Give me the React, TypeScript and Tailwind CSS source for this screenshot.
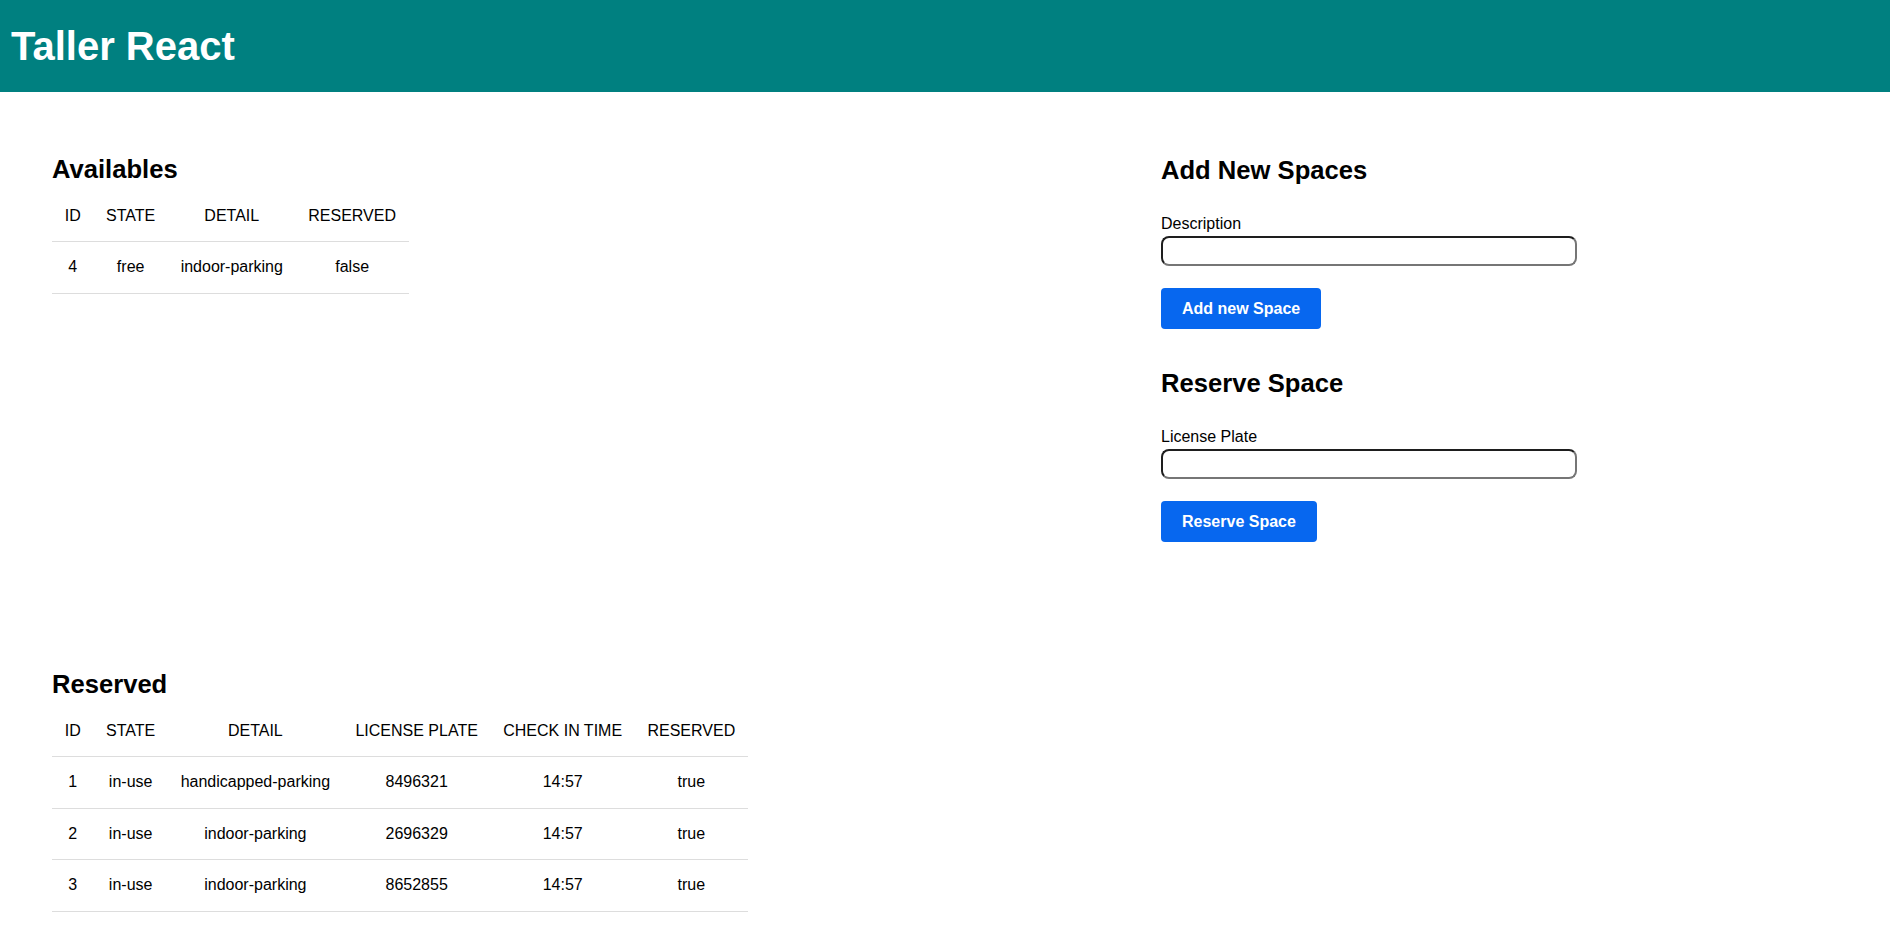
import React from 'react';

const available = [{ id: 4, state: 'free', detail: 'indoor-parking', reserved: 'false' }];

const reserved = [
  { id: 1, state: 'in-use', detail: 'handicapped-parking', plate: '8496321', time: '14:57', reserved: 'true' },
  { id: 2, state: 'in-use', detail: 'indoor-parking', plate: '2696329', time: '14:57', reserved: 'true' },
  { id: 3, state: 'in-use', detail: 'indoor-parking', plate: '8652855', time: '14:57', reserved: 'true' },
];

const cell = 'px-[12.7px] py-4 leading-[18.4px] text-center font-normal border-b border-[#dddddd]';

const Table = ({ headers, rows }: { headers: string[]; rows: (string | number)[][] }) => (
  <table className="mt-[7px] text-base text-black">
    <thead>
      <tr>
        {headers.map((h) => (
          <th key={h} className={cell}>
            {h}
          </th>
        ))}
      </tr>
    </thead>
    <tbody>
      {rows.map((r, i) => (
        <tr key={i}>
          {r.map((v, j) => (
            <td key={j} className={cell}>
              {v}
            </td>
          ))}
        </tr>
      ))}
    </tbody>
  </table>
);

const Field = ({ label, button }: { label: string; button: string }) => (
  <div>
    <label className="block mt-[30px] text-base leading-[18px] text-black">{label}</label>
    <input
      type="text"
      className="block mt-[3px] w-[416px] h-[30px] rounded-lg border-2 border-t-[#1e1e1e] border-l-[#1e1e1e] border-b-[#767676] border-r-[#767676] bg-white px-2 outline-none"
    />
    <button className="block mt-[22px] h-[41px] px-[21px] rounded-[4px] bg-[#0767ef] text-white text-base font-bold leading-[18px]">
      {button}
    </button>
  </div>
);

export default function App() {
  return (
    <div className="min-h-screen bg-white font-['Liberation_Sans',Arial,sans-serif]">
      <header className="h-[92px] bg-[#008080] flex items-center px-[11px]">
        <h1 className="text-[40px] font-bold text-white leading-[46px]">Taller React</h1>
      </header>

      <main className="pl-[52px] pt-[62px]">
        <div className="flex">
          <section className="w-[1109px] shrink-0">
            <h2 className="text-[25.6px] font-bold leading-[30px] text-black">Availables</h2>
            <Table
              headers={['ID', 'STATE', 'DETAIL', 'RESERVED']}
              rows={available.map((a) => [a.id, a.state, a.detail, a.reserved])}
            />
          </section>

          <section className="pt-[1px]">
            <h2 className="text-[25.6px] font-bold leading-[30px] text-black">Add New Spaces</h2>
            <Field label="Description" button="Add new Space" />
            <h2 className="mt-[39px] text-[25.6px] font-bold leading-[30px] text-black">Reserve Space</h2>
            <Field label="License Plate" button="Reserve Space" />
          </section>
        </div>

        <section className="mt-[127px] pb-10">
          <h2 className="text-[25.6px] font-bold leading-[30px] text-black">Reserved</h2>
          <Table
            headers={['ID', 'STATE', 'DETAIL', 'LICENSE PLATE', 'CHECK IN TIME', 'RESERVED']}
            rows={reserved.map((r) => [r.id, r.state, r.detail, r.plate, r.time, r.reserved])}
          />
        </section>
      </main>
    </div>
  );
}
